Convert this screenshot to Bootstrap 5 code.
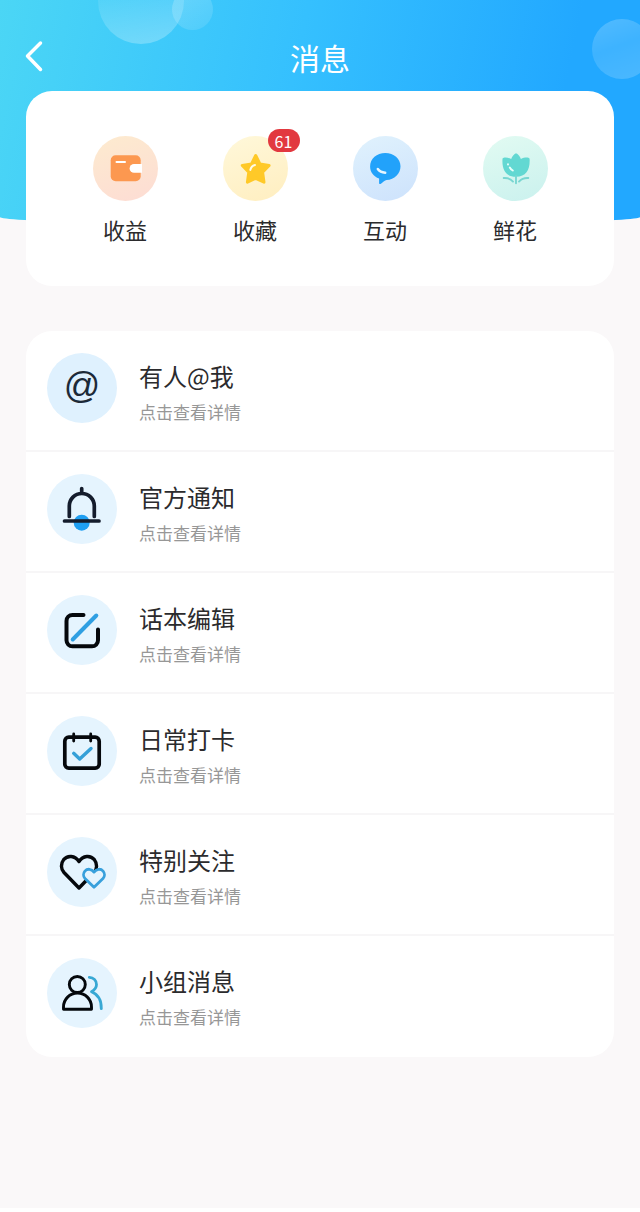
<!DOCTYPE html>
<html lang="zh-CN">
<head>
<meta charset="utf-8">
<meta name="viewport" content="width=device-width, initial-scale=1">
<title>消息</title>
<link href="https://cdn.jsdelivr.net/npm/bootstrap@5.3.0/dist/css/bootstrap.min.css" rel="stylesheet">
<style>
body { background: #faf8f9; color: #2b2b2d; font-family: "Noto Sans CJK SC", sans-serif; }
.page { border-bottom: 4px solid #fff; }
.hero {
  height: 225px;
  background: linear-gradient(102deg, #4bd6f5 0%, #35c0fe 45%, #22a8ff 85%);
  border-radius: 0 0 50% 50% / 0 0 8px 8px;
}
.topbar { height: 91px; padding-top: 22px; }
.page-title { font-size: 30px; line-height: 40px; }
.back { left: 20px; top: 36px; width: 28px; height: 40px; }
.bubble { border-radius: 50%; }
.bubble-lg { left: 98px; top: -42px; width: 86px; height: 86px; background: linear-gradient(170deg, #ffffff10 35%, #ffffff48); }
.bubble-sm { left: 172px; top: -11px; width: 41px; height: 41px; background: linear-gradient(150deg, #ffffff38, #ffffff18); }
.bubble-rt { right: -12px; top: 19px; width: 60px; height: 60px; background: linear-gradient(160deg, #ffffff38, #ffffff20 45%, #ffffff30); }
.panel { border-radius: 26px; margin-left: 26px; margin-right: 26px; }
.shortcuts { margin-top: -134px; padding: 45px 34px 42px; }
.shortcut-icon { width: 65px; height: 65px; border-radius: 50%; }
.tone-orange { background: linear-gradient(160deg, #fdebcf, #fddcd4); }
.tone-yellow { background: linear-gradient(160deg, #fff8da, #ffeec0); }
.tone-blue { background: linear-gradient(160deg, #e0f2fd, #cde2fc); }
.tone-green { background: linear-gradient(160deg, #e2fbf2, #caf1ee); }
.shortcut-label { font-size: 22px; line-height: 30px; margin-top: 13px; }
.count { left: 45px; top: -7px; width: 32px; height: 23px; border-radius: 12px; background: #e2383f; font: 16px/24px "Noto Sans CJK SC", sans-serif; }
.messages { margin-top: 45px; }
.message { height: 121px; padding: 22px 21px 0; gap: 22px; border-bottom: 2px solid #f7f6f7; }
.message:last-child { border-bottom: 0; }
.message-icon { width: 70px; height: 70px; border-radius: 50%; background: #e5f4fe; }
.at-sign { background: #dff1fe; color: #1c2a38; font: 36px/66px "Liberation Sans", sans-serif; }
.message-title { font-size: 24px; line-height: 32px; margin-top: 7px; }
.message-note { font-size: 17px; line-height: 24px; margin-top: 8px; color: #979797; }
.bottom-space { height: 151px; }
.line { fill: none; stroke-linecap: round; stroke-linejoin: round; }
</style>
</head>
<body>
<div class="page">
  <header class="hero position-relative overflow-hidden text-white">
    <span class="bubble bubble-sm position-absolute"></span>
    <span class="bubble bubble-lg position-absolute"></span>
    <span class="bubble bubble-rt position-absolute"></span>
    <div class="topbar d-flex align-items-center justify-content-center position-relative">
      <button type="button" class="back btn p-0 border-0 position-absolute d-flex" aria-label="返回">
        <svg width="28" height="40" viewBox="0 0 28 40"><path class="line" d="M20.500 7 7.500 20l13 13.500" stroke="#fff" stroke-width="3.500"/></svg>
      </button>
      <h1 class="page-title fw-normal m-0">消息</h1>
    </div>
  </header>

  <main>
    <nav class="panel shortcuts position-relative bg-white" aria-label="快捷入口">
      <div class="row g-0 row-cols-4 text-center">
        <a href="#" class="col d-flex flex-column align-items-center text-reset text-decoration-none">
          <span class="shortcut-icon tone-orange">
            <svg class="d-block" width="65" height="65" viewBox="0 0 65 65"><rect x="17.700" y="19.300" width="30" height="26" rx="5" fill="#fc9850"/><path d="M49 28H41a4.300 4.300 0 0 0 0 8.800h8z" fill="#fff"/><path class="line" d="M23.500 26h8.500" stroke="#fff" stroke-width="2"/></svg>
          </span>
          <span class="shortcut-label">收益</span>
        </a>
        <a href="#" class="col d-flex flex-column align-items-center text-reset text-decoration-none">
          <span class="shortcut-icon tone-yellow position-relative">
            <svg class="d-block" width="65" height="65" viewBox="0 0 65 65"><path d="M32.700 19.500l4.200 8.400 9.200 1.500-6.500 6.700 1.400 10.100-8.300-3.900-8.300 3.900 1.400-10.100-6.500-6.700 9.200-1.500z" fill="#ffc928" stroke="#ffc928" stroke-width="3" stroke-linejoin="round"/><path class="line" d="M27.300 34c.5-2.600 2-4.300 4.700-5" stroke="#fffbe8" stroke-width="2"/></svg>
            <span class="count position-absolute text-white">61</span>
          </span>
          <span class="shortcut-label">收藏</span>
        </a>
        <a href="#" class="col d-flex flex-column align-items-center text-reset text-decoration-none">
          <span class="shortcut-icon tone-blue">
            <svg class="d-block" width="65" height="65" viewBox="0 0 65 65"><path d="M32.300 17c8.500 0 15.200 5.700 15.200 13.200S41.500 43.600 33.500 44c-2.500.5-4 3-6 4-1 .3-1.400-.2-1.400-1v-4.400C20.500 40.500 17.100 36 17.100 30.500 17.100 22.700 23.800 17 32.300 17z" fill="#22a2fa"/><path class="line" d="M24.800 33c1.600 2.300 4.200 3.500 7.400 3.700" stroke="#e6f5ff" stroke-width="2.500"/></svg>
          </span>
          <span class="shortcut-label">互动</span>
        </a>
        <a href="#" class="col d-flex flex-column align-items-center text-reset text-decoration-none">
          <span class="shortcut-icon tone-green">
            <svg class="d-block" width="65" height="65" viewBox="0 0 65 65"><path d="M28.200 23c.8-2.500 2.600-4.300 4.100-5.400.5-.3 1-.3 1.500 0 1.500 1.100 3.300 2.900 4.100 5.400 2.500-1.300 5-1.600 7.500-1.300.7.100 1.200.6 1.200 1.300C47.200 33 43.500 40.800 33 40.800S18.800 33 19.500 23c0-.7.500-1.200 1.200-1.300 2.500-.3 5 0 7.500 1.300z" fill="#62d8d2"/><path class="line" d="M33 40v7.300M20.700 42c4-.3 7 1 9.300 3.600M45.300 42c-4-.3-7 1-9.300 3.600" stroke="#79d6d1" stroke-width="1.900"/><path class="line" d="M25 28.200v.3M26.800 31.500c.7 1.300 1.600 2.200 3 3" stroke="#e8fffa" stroke-width="1.900"/></svg>
          </span>
          <span class="shortcut-label">鲜花</span>
        </a>
      </div>
    </nav>

    <div class="panel messages bg-white overflow-hidden">
      <a href="#" class="message d-flex align-items-start text-reset text-decoration-none">
        <span class="message-icon at-sign flex-shrink-0 text-center" aria-hidden="true">@</span>
        <span class="d-flex flex-column"><span class="message-title">有人@我</span><span class="message-note">点击查看详情</span></span>
      </a>
      <a href="#" class="message d-flex align-items-start text-reset text-decoration-none">
        <svg class="message-icon flex-shrink-0" viewBox="0 0 70 70"><circle cx="34.700" cy="48.700" r="8" fill="#1f9ff2"/><path class="line" d="M34.700 14.500v4M22.300 42.500V32a12.500 12.500 0 0 1 25 0v10.500M17.500 47h34.500" stroke="#141c2c" stroke-width="3.700"/></svg>
        <span class="d-flex flex-column"><span class="message-title">官方通知</span><span class="message-note">点击查看详情</span></span>
      </a>
      <a href="#" class="message d-flex align-items-start text-reset text-decoration-none">
        <svg class="message-icon flex-shrink-0" viewBox="0 0 70 70"><path class="line" d="M36.500 20H25.500a6 6 0 0 0-6 6v19.300a6 6 0 0 0 6 6H45a6 6 0 0 0 6-6V34.500" stroke="#05080c" stroke-width="4"/><path class="line" d="M25.700 44.500 49.300 20.500" stroke="#2f9fe2" stroke-width="4"/></svg>
        <span class="d-flex flex-column"><span class="message-title">话本编辑</span><span class="message-note">点击查看详情</span></span>
      </a>
      <a href="#" class="message d-flex align-items-start text-reset text-decoration-none">
        <svg class="message-icon flex-shrink-0" viewBox="0 0 70 70"><rect class="line" x="17.800" y="21.200" width="34.400" height="31" rx="4" stroke="#05080c" stroke-width="3.700"/><path class="line" d="M26.700 18v7M43.700 18v7" stroke="#05080c" stroke-width="2.800"/><path class="line" d="m26.700 37.300 6 5.700L44 32.500" stroke="#35a0d8" stroke-width="3.400"/></svg>
        <span class="d-flex flex-column"><span class="message-title">日常打卡</span><span class="message-note">点击查看详情</span></span>
      </a>
      <a href="#" class="message d-flex align-items-start text-reset text-decoration-none">
        <svg class="message-icon flex-shrink-0" viewBox="0 0 70 70"><path class="line" d="M32 51 17 35.500c-3.300-3.600-3.400-9-.4-12.800 4-4.700 11.300-4.300 15.400 1.800 4.100-6.100 11.400-6.500 15.400-1.800 3 3.800 2.900 9.200-.4 12.800z" stroke="#05080c" stroke-width="3.400"/><path d="M47 50.300 38 41.500c-2-2.200-1.900-5.300-.1-7.400 2.400-2.700 6.600-2.500 9.100 1 2.500-3.500 6.700-3.700 9.100-1 1.800 2.100 1.900 5.200-.1 7.400z" fill="#e5f4fe" stroke="#38a0dc" stroke-width="2.800" stroke-linejoin="round"/></svg>
        <span class="d-flex flex-column"><span class="message-title">特别关注</span><span class="message-note">点击查看详情</span></span>
      </a>
      <a href="#" class="message d-flex align-items-start text-reset text-decoration-none">
        <svg class="message-icon flex-shrink-0" viewBox="0 0 70 70"><circle class="line" cx="30.300" cy="26.500" r="8" stroke="#05080c" stroke-width="2.900"/><path class="line" d="M16.500 51.300V49a14 14 0 0 1 28 0v2.300z" stroke="#05080c" stroke-width="2.900"/><path class="line" d="M42.300 19.300c4.200.3 7.200 3.300 7.200 7.200 0 3.200-1.800 5.300-5 7.300 6.700 2.700 10 8.700 9.800 16.900" stroke="#38a8d4" stroke-width="2.800"/></svg>
        <span class="d-flex flex-column"><span class="message-title">小组消息</span><span class="message-note">点击查看详情</span></span>
      </a>
    </div>
    <div class="bottom-space"></div>
  </main>
</div>
<script src="https://cdn.jsdelivr.net/npm/bootstrap@5.3.0/dist/js/bootstrap.bundle.min.js"></script>
</body>
</html>
